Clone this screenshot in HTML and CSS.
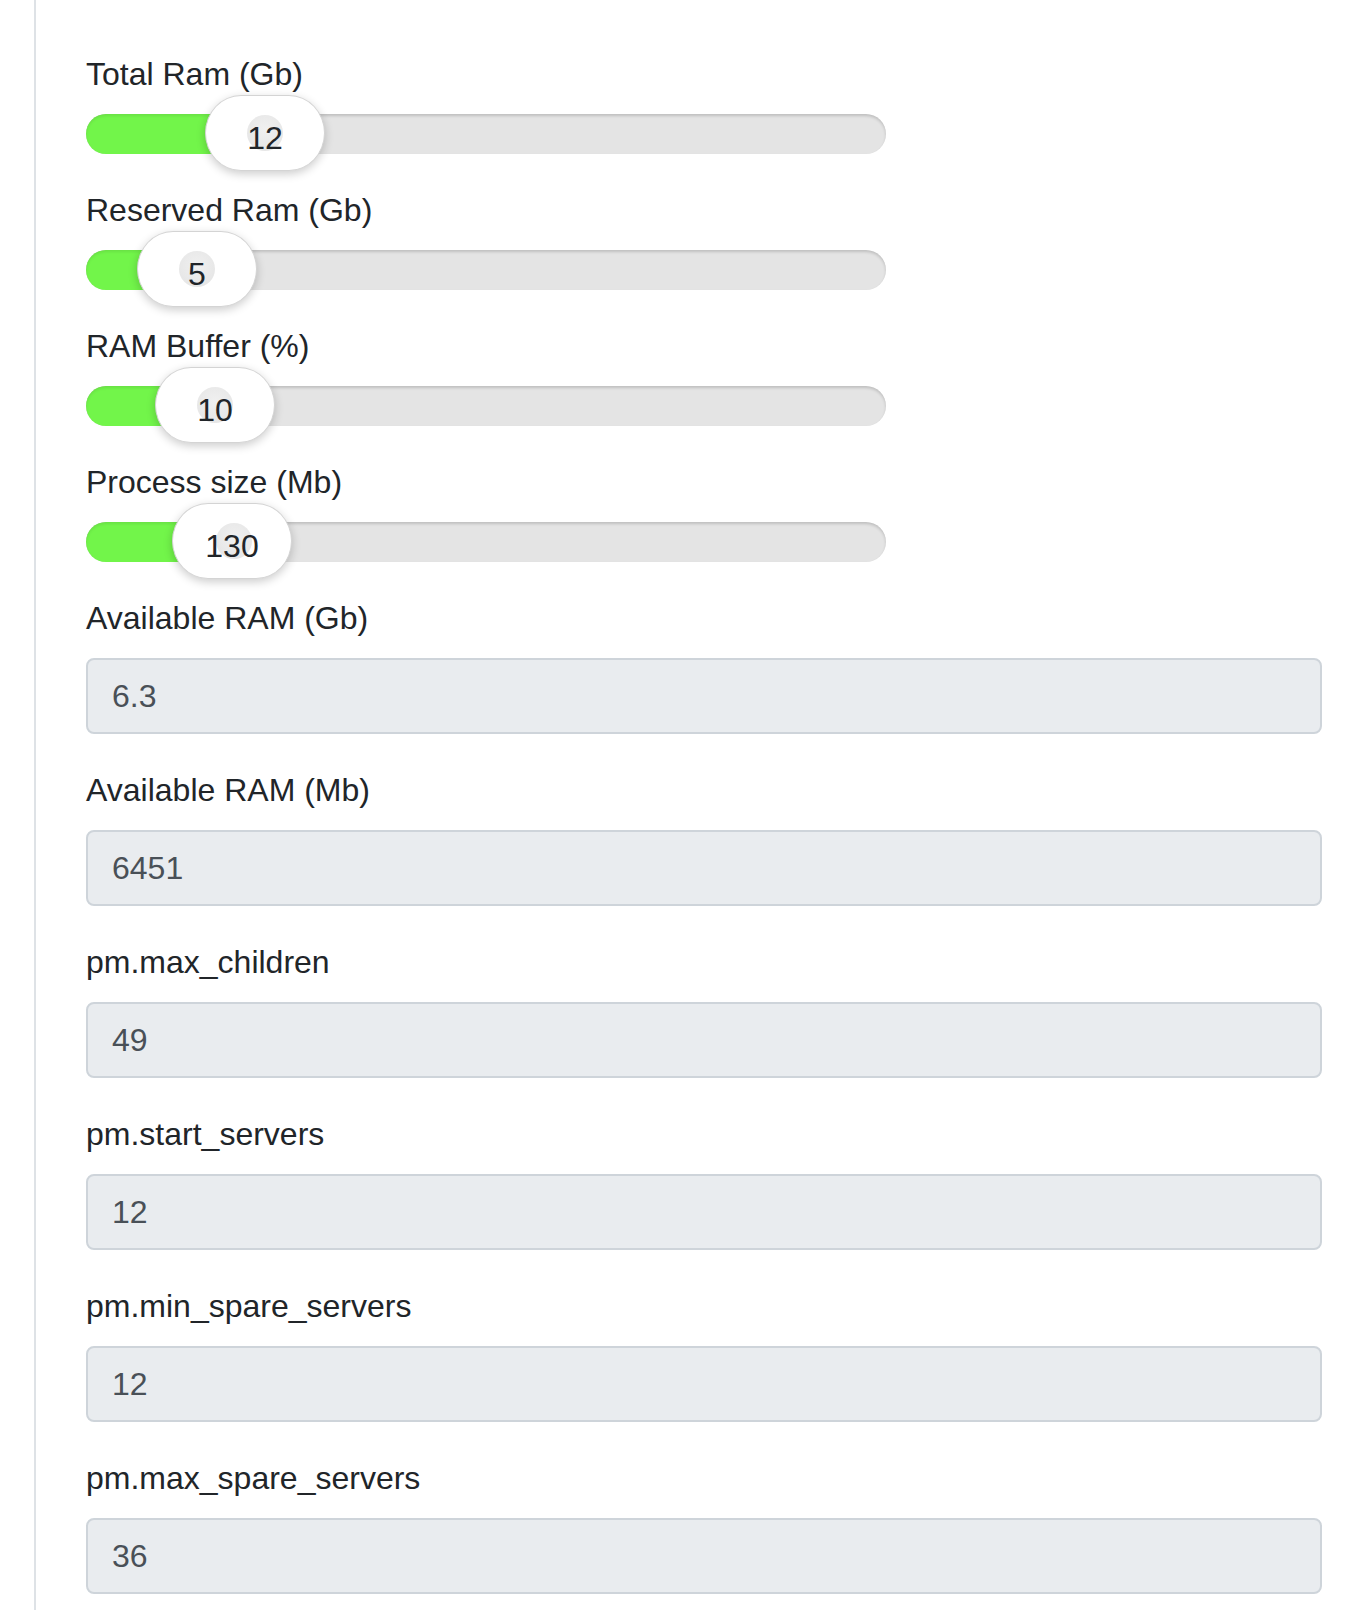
FILE: index.html
```html
<!DOCTYPE html>
<html lang="en">
<head>
<meta charset="utf-8">
<title>PHP-FPM calculator</title>
<link rel="stylesheet" href="styles.css">
</head>
<body>
<div class="page">
  <form class="calc">
    <div class="slider-group">
      <label class="label">Total Ram (Gb)</label>
      <div class="track">
        <div class="fill" style="width:179px"></div>
        <div class="handle" style="left:179px"><span class="dot"></span><span class="val">12</span></div>
      </div>
    </div>
    <div class="slider-group">
      <label class="label">Reserved Ram (Gb)</label>
      <div class="track">
        <div class="fill" style="width:111px"></div>
        <div class="handle" style="left:111px"><span class="dot"></span><span class="val">5</span></div>
      </div>
    </div>
    <div class="slider-group">
      <label class="label">RAM Buffer (%)</label>
      <div class="track">
        <div class="fill" style="width:129px"></div>
        <div class="handle" style="left:129px"><span class="dot"></span><span class="val">10</span></div>
      </div>
    </div>
    <div class="slider-group">
      <label class="label">Process size (Mb)</label>
      <div class="track">
        <div class="fill" style="width:146px"></div>
        <div class="handle" style="left:146px"><span class="dot dot-left"></span><span class="val">130</span></div>
      </div>
    </div>

    <div class="field-group">
      <label class="label">Available RAM (Gb)</label>
      <input class="field" type="text" value="6.3" readonly>
    </div>
    <div class="field-group">
      <label class="label">Available RAM (Mb)</label>
      <input class="field" type="text" value="6451" readonly>
    </div>
    <div class="field-group">
      <label class="label">pm.max_children</label>
      <input class="field" type="text" value="49" readonly>
    </div>
    <div class="field-group">
      <label class="label">pm.start_servers</label>
      <input class="field" type="text" value="12" readonly>
    </div>
    <div class="field-group">
      <label class="label">pm.min_spare_servers</label>
      <input class="field" type="text" value="12" readonly>
    </div>
    <div class="field-group">
      <label class="label">pm.max_spare_servers</label>
      <input class="field" type="text" value="36" readonly>
    </div>
  </form>
</div>
</body>
</html>
```

FILE: styles.css
```css
* {
  box-sizing: border-box;
}

html, body {
  margin: 0;
  padding: 0;
  background: #ffffff;
}

body {
  font-family: "Liberation Sans", Arial, sans-serif;
  font-size: 32px;
  line-height: 48px;
  color: #212529;
}

.page {
  margin-left: 34px;
  border-left: 2px solid #dee2e6;
  padding: 50px 24px 0 50px;
  min-height: 100vh;
}

.calc {
  display: flex;
  flex-direction: column;
}

.label {
  display: block;
  margin-bottom: 16px;
  font-size: 32px;
  line-height: 48px;
  color: #212529;
}

.slider-group {
  margin-bottom: 32px;
}

.track {
  position: relative;
  width: 800px;
  height: 40px;
  border-radius: 20px;
  background: #e4e4e4;
  box-shadow: inset 0 2px 3px rgba(0, 0, 0, 0.16);
}

.fill {
  height: 40px;
  border-radius: 20px 0 0 20px;
  background: #72f54a;
  box-shadow: inset 0 2px 3px rgba(0, 0, 0, 0.08);
}

.handle {
  position: absolute;
  top: -19px;
  width: 120px;
  height: 76px;
  margin-left: -60px;
  border-radius: 36px / 38px;
  background: #ffffff;
  border: 1px solid #d4d4d4;
  box-shadow: 0 3px 10px rgba(0, 0, 0, 0.2);
  display: flex;
  align-items: center;
  justify-content: center;
}

.dot {
  position: absolute;
  left: 50%;
  top: 50%;
  width: 36px;
  height: 36px;
  margin: -18px 0 0 -18px;
  border-radius: 50%;
  background: radial-gradient(circle at 50% 40%, #f0f0f0, #e3e3e3);
}

.dot-left {
  margin-left: -16px;
}

.val {
  position: relative;
  margin-top: 10px;
  font-size: 32px;
  line-height: 48px;
  color: #212529;
}

.field-group {
  margin-bottom: 32px;
}

.field {
  display: block;
  width: 100%;
  height: 76px;
  padding: 12px 24px;
  font-family: "Liberation Sans", Arial, sans-serif;
  font-size: 32px;
  line-height: 48px;
  color: #495057;
  background: #e9ecef;
  border: 2px solid #ced4da;
  border-radius: 8px;
  outline: none;
}
```
